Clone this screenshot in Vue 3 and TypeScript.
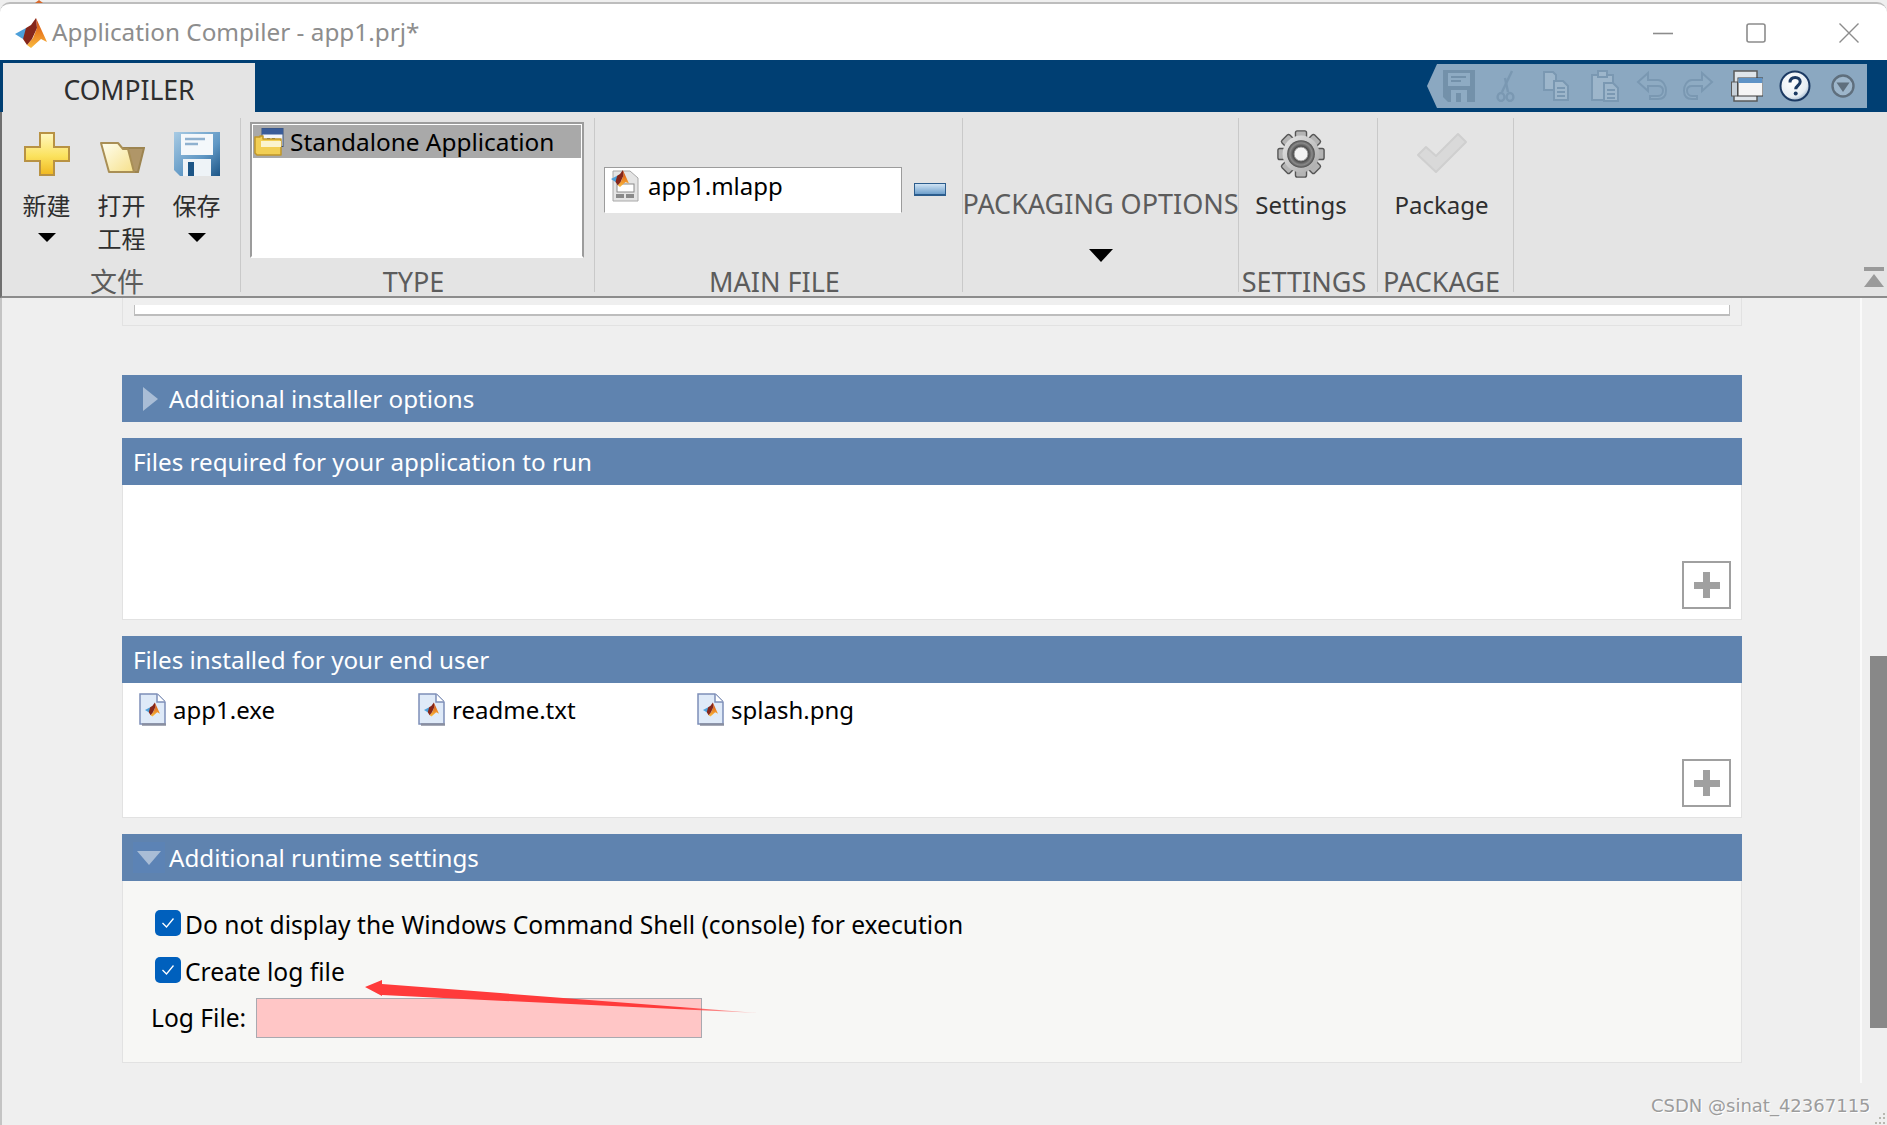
<script setup lang="ts">
const installed: string[] = ['app1.exe', 'readme.txt', 'splash.png']
</script>

<template>
  <div class="window">
    <svg class="defs" width="0" height="0" aria-hidden="true">
      <defs>
        <linearGradient id="mlOrange" x1="0" y1="0" x2="0" y2="1">
          <stop offset="0" stop-color="#c9471c" />
          <stop offset="0.5" stop-color="#ea7f20" />
          <stop offset="1" stop-color="#f9bb40" />
        </linearGradient>
        <linearGradient id="plusFill" x1="0" y1="0" x2="0" y2="1">
          <stop offset="0" stop-color="#fff7c0" />
          <stop offset="0.55" stop-color="#fbe25e" />
          <stop offset="1" stop-color="#f0b820" />
        </linearGradient>
        <linearGradient id="folderFill" x1="0" y1="0" x2="1" y2="1">
          <stop offset="0" stop-color="#fffff0" />
          <stop offset="1" stop-color="#f6e08a" />
        </linearGradient>
        <linearGradient id="saveFill" x1="0" y1="0" x2="1" y2="1">
          <stop offset="0" stop-color="#a8cbe4" />
          <stop offset="0.6" stop-color="#5f97c4" />
          <stop offset="1" stop-color="#1c5586" />
        </linearGradient>
        <radialGradient id="helpFill" cx="0.4" cy="0.35" r="0.75">
          <stop offset="0" stop-color="#ffffff" />
          <stop offset="0.7" stop-color="#e6edf3" />
          <stop offset="1" stop-color="#7d9ab8" />
        </radialGradient>
        <radialGradient id="gearRing" cx="0.5" cy="0.5" r="0.5">
          <stop offset="0.5" stop-color="#3f3f3f" />
          <stop offset="0.8" stop-color="#8a8a8a" />
          <stop offset="1" stop-color="#4a4a4a" />
        </radialGradient>
        <linearGradient id="gearBody" x1="0" y1="0" x2="1" y2="1">
          <stop offset="0" stop-color="#e6e6e6" />
          <stop offset="1" stop-color="#a8a8a8" />
        </linearGradient>
        <symbol id="mlLogo" viewBox="0 0 32 30">
          <polygon points="0,16 11,10 15,14 8,21" fill="#4c9fd9" />
          <polygon points="21,0 32,24 26,21 16,30 12,27 18,20 22,10" fill="url(#mlOrange)" />
          <polygon points="11,10 16,7 21,0 22,10 17,21 12,27 8,21" fill="#85261a" />
        </symbol>
        <symbol id="fileIcon" viewBox="0 0 28 33">
          <path d="M3 1h16l7 7v23H3z" fill="#5a6f9a" />
          <path d="M1 1h17l8 8v22H1z" fill="#dfeaf8" stroke="#7d8fb8" stroke-width="1.5" />
          <path d="M18 1v8h8" fill="#ffffff" stroke="#7d8fb8" stroke-width="1.5" />
          <path d="M3 31.500h24" stroke="#8a8fa0" stroke-width="2.5" />
          <use href="#mlLogo" x="6" y="9" width="15" height="15" />
        </symbol>
      </defs>
    </svg>
    <span class="peek" />

    <header class="titlebar">
      <svg class="logo" width="32" height="30"><use href="#mlLogo" /></svg>
      <span class="title">Application Compiler - app1.prj*</span>
      <div class="winbtns">
        <svg width="20" height="20" viewBox="0 0 20 20"><path d="M0 10.500h20" stroke="#8c8c8c" stroke-width="1.6" /></svg>
        <svg width="20" height="20" viewBox="0 0 20 20"><rect x="1" y="1" width="18" height="18" rx="2" fill="none" stroke="#8c8c8c" stroke-width="1.6" /></svg>
        <svg width="20" height="20" viewBox="0 0 20 20"><path d="M0.500 0.500l19 19M19.500 0.500l-19 19" stroke="#8c8c8c" stroke-width="1.4" /></svg>
      </div>
    </header>

    <div class="band">
      <div class="tab">COMPILER</div>
      <div class="quick">
        <svg class="q" style="width:32px" viewBox="0 0 32 32"><path d="M0 0h32v32H5l-5-5z" fill="#7391aa" /><rect x="5" y="3" width="22" height="13" fill="#8eabc3" /><rect x="8" y="6" width="15" height="2" fill="#7391aa" /><rect x="8" y="10" width="10" height="2" fill="#7391aa" /><rect x="8" y="20" width="16" height="12" fill="#8eabc3" /><rect x="13" y="23" width="5" height="9" fill="#7391aa" /></svg>
        <svg class="q" style="width:19px" viewBox="0 0 19 32"><g fill="none" stroke="#7a98b2" stroke-width="2.4"><path d="M6 22L16 1" /><path d="M12 22L9 8" /><ellipse cx="5" cy="27" rx="3.400" ry="4" /><ellipse cx="14" cy="27" rx="3.400" ry="4" /></g></svg>
        <svg class="q" style="width:26px" viewBox="0 0 26 30"><g fill="#9db6cb" stroke="#7a98b2" stroke-width="2"><path d="M1 1h9l3 3v15H1z" /><path d="M11 10h9l5 5v14H11z" /><path d="M14 17h8M14 21h8M14 25h8" fill="none" /></g></svg>
        <svg class="q" style="width:28px" viewBox="0 0 28 32"><g fill="#9db6cb" stroke="#7a98b2" stroke-width="2"><path d="M1 5h21v25H1z" /><rect x="7" y="1" width="9" height="6" /><path d="M13 13h9l5 5v13H13z" /><path d="M16 20h8M16 24h8M16 28h8" fill="none" /></g></svg>
        <svg class="q" style="width:31px" viewBox="0 0 31 30"><path d="M12 2L2 11l10 9v-5h10c3 0 5 1.500 5 4.500S25 25 22 25h-8v3h8c6 0 8-4 8-8.500S27 9 22 9H12z" fill="#8eabc3" stroke="#7a98b2" stroke-width="2" /></svg>
        <svg class="q" style="width:31px" viewBox="0 0 31 30"><path d="M19 2l10 9-10 9v-5H9c-3 0-5 1.500-5 4.500S6 25 9 25h5v3H9c-6 0-8-4-8-8.500S4 9 9 9h10z" fill="#8eabc3" stroke="#7a98b2" stroke-width="2" /></svg>
        <svg class="q" style="width:32px" viewBox="0 0 32 32"><rect x="3" y="1" width="23" height="30" fill="#dfe5ea" stroke="#5a5a5a" stroke-width="1.500" /><rect x="0.500" y="12" width="6" height="14" fill="#c7d0d8" stroke="#5a5a5a" /><rect x="7" y="8" width="25" height="18" fill="#f5f5f5" stroke="#3a3a3a" /><rect x="7.500" y="8" width="24" height="5" fill="#5f93c6" /></svg>
        <svg class="q" style="width:32px" viewBox="0 0 32 32"><circle cx="16" cy="16" r="14.500" fill="url(#helpFill)" stroke="#1c3a63" stroke-width="2" /><path d="M11 12.500c0-3.500 2.200-5 5.200-5s5 1.700 5 4.300c0 3.700-4.500 3.700-4.500 7.500" fill="none" stroke="#1c3a63" stroke-width="3" /><circle cx="16.700" cy="23.500" r="2" fill="#1c3a63" /></svg>
        <svg class="q" style="width:24px" viewBox="0 0 24 24"><circle cx="12" cy="12" r="10.500" fill="#9db6cb" stroke="#5f6f7d" stroke-width="2.400" /><path d="M5.500 8.500h13L12 18z" fill="#5f6f7d" /></svg>
      </div>
    </div>

    <div class="ribbon">
      <section class="group g-file">
        <div class="group-main tools">
          <div class="tool">
            <svg width="46" height="44" viewBox="0 0 46 44"><path d="M16 1h14v14h15v14H30v14H16V29H1V15h15z" fill="url(#plusFill)" stroke="#b89243" stroke-width="2" /></svg>
            <span>新建</span>
            <i class="caret" />
          </div>
          <div class="tool">
            <svg width="46" height="44" viewBox="0 0 46 44"><path d="M22 16h23l-6 24H26z" fill="#b09668" stroke="#9c8450" stroke-width="2" /><path d="M2 11h17l5 6h5l6 23H10z" fill="url(#folderFill)" stroke="#a98f55" stroke-width="2" stroke-linejoin="round" /></svg>
            <span>打开<br />工程</span>
          </div>
          <div class="tool">
            <svg width="46" height="44" viewBox="0 0 46 44"><path d="M0 0h46v44H6l-6-6z" fill="url(#saveFill)" /><rect x="7" y="2" width="32" height="21" fill="#f4f8fb" /><path d="M11 7h20M11 12h13" stroke="#8fb1cf" stroke-width="2.500" /><rect x="9" y="27" width="28" height="17" fill="#eef3f7" /><rect x="14" y="30" width="6" height="14" fill="#1c5586" /></svg>
            <span>保存</span>
            <i class="caret" />
          </div>
        </div>
        <div class="group-label">文件</div>
      </section>

      <section class="group g-type">
        <div class="group-main">
          <div class="typelist">
            <div class="typerow">
              <svg width="30" height="28" viewBox="0 0 30 28"><rect x="8" y="0.500" width="21" height="18" fill="#f4f6fa" stroke="#39527d" /><rect x="8" y="0.500" width="21" height="6" fill="#3a5c99" /><path d="M13 11h3M18 11h3" stroke="#39527d" stroke-width="2" /><path d="M1 9h5v-1h3v3h18v16H3l-2-2z" fill="#f2cf55" stroke="#c0962a" stroke-width="1.500" stroke-linejoin="round" /><rect x="7" y="13" width="20" height="6" fill="#fbf4cf" /></svg>
              <span>Standalone Application</span>
            </div>
          </div>
        </div>
        <div class="group-label">TYPE</div>
      </section>

      <section class="group g-main">
        <div class="group-main mainfile">
          <div class="fileinput">
            <svg width="28" height="32" viewBox="0 0 28 32"><path d="M2 1h17l8 7v23H2z" fill="#e4e4e4" stroke="#a8a8a8" /><rect x="6" y="14" width="17" height="8" fill="#fff" stroke="#8a8a8a" /><rect x="5" y="24" width="8" height="4" fill="#8a8a8a" /><rect x="15" y="24" width="8" height="4" fill="#8a8a8a" /><use href="#mlLogo" x="0" y="0" width="18" height="17" /></svg>
            <span>app1.mlapp</span>
          </div>
          <span class="minus" />
        </div>
        <div class="group-label">MAIN FILE</div>
      </section>

      <section class="group g-pack">
        <div class="group-main packopts">
          <span>PACKAGING OPTIONS</span>
          <i class="caret big" />
        </div>
      </section>

      <section class="group g-settings">
        <div class="group-main big-tool">
          <svg width="48" height="48" viewBox="0 0 52 52">
            <g fill="#b4b4b4" stroke="#555" stroke-width="1.500">
              <rect x="20" y="1" width="12" height="50" rx="2" />
              <rect x="20" y="1" width="12" height="50" rx="2" transform="rotate(45 26 26)" />
              <rect x="20" y="1" width="12" height="50" rx="2" transform="rotate(90 26 26)" />
              <rect x="20" y="1" width="12" height="50" rx="2" transform="rotate(135 26 26)" />
            </g>
            <circle cx="26" cy="26" r="20" fill="url(#gearBody)" />
            <circle cx="26" cy="26" r="15" fill="url(#gearRing)" />
            <circle cx="26" cy="26" r="7.500" fill="#f4f4f4" stroke="#9a9a9a" />
          </svg>
          <span>Settings</span>
        </div>
        <div class="group-label">SETTINGS</div>
      </section>

      <section class="group g-package">
        <div class="group-main big-tool">
          <svg width="52" height="48" viewBox="0 2 52 48"><path d="M2 27l8-8 10 9L42 6l8 8-30 30z" fill="#d9d9d9" stroke="#cfcfcf" stroke-width="2" stroke-linejoin="round" /></svg>
          <span>Package</span>
        </div>
        <div class="group-label">PACKAGE</div>
      </section>

      <div class="collapse">
        <span class="cbar" />
        <span class="ctri" />
      </div>
    </div>

    <div class="main">
      <div class="scrollarea">
        <div class="stub"><div class="stub-inner" /></div>

        <section class="panel">
          <div class="phead indent">
            <i class="tri-right" />
            Additional installer options
          </div>
        </section>

        <section class="panel">
          <div class="phead">Files required for your application to run</div>
          <div class="pbody files">
            <button class="addbtn"><span class="plus" /></button>
          </div>
        </section>

        <section class="panel">
          <div class="phead">Files installed for your end user</div>
          <div class="pbody files">
            <div class="filerow">
              <div v-for="f in installed" :key="f" class="fileitem">
                <svg width="28" height="33"><use href="#fileIcon" /></svg>
                <span>{{ f }}</span>
              </div>
            </div>
            <button class="addbtn"><span class="plus" /></button>
          </div>
        </section>

        <section class="panel">
          <div class="phead indent">
            <span class="tri-box"><i class="tri-down" /></span>
            Additional runtime settings
          </div>
          <div class="pbody runtime">
            <label class="check">
              <span class="box"><svg width="14" height="12" viewBox="0 0 14 12"><path d="M1.500 6l4 4 7-8.500" fill="none" stroke="#fff" stroke-width="1.300" /></svg></span>
              <span class="check-text">Do not display the Windows Command Shell (console) for execution</span>
            </label>
            <label class="check">
              <span class="box"><svg width="14" height="12" viewBox="0 0 14 12"><path d="M1.500 6l4 4 7-8.500" fill="none" stroke="#fff" stroke-width="1.300" /></svg></span>
              <span class="check-text">Create log file</span>
            </label>
            <div class="logrow">
              <span class="loglabel">Log File:</span>
              <div class="loginput" />
            </div>
          </div>
        </section>
      </div>

      <div class="track"><div class="thumb" /></div>
    </div>

    <svg class="annot" width="400" height="40" viewBox="0 0 400 40">
      <defs>
        <linearGradient id="arrowFade" x1="0" y1="0" x2="1" y2="0">
          <stop offset="0.8" stop-color="#ff3b3b" />
          <stop offset="1" stop-color="#ff3b3b" stop-opacity="0.2" />
        </linearGradient>
      </defs>
      <polygon points="1,7 18,0 18,4 394,33 18,15 18,16" fill="url(#arrowFade)" />
    </svg>

    <div class="watermark">CSDN @sinat_42367115</div>
    <svg class="grip" width="16" height="13" viewBox="0 0 16 13">
      <g fill="#b8b8b0">
        <rect x="12" y="1" width="2" height="2" />
        <rect x="8" y="5" width="2" height="2" /><rect x="12" y="5" width="2" height="2" />
        <rect x="4" y="10" width="2" height="2" /><rect x="8" y="10" width="2" height="2" /><rect x="12" y="10" width="2" height="2" />
      </g>
    </svg>
  </div>
</template>

<style>
html, body { margin: 0; background: #efefef; }
</style>

<style scoped>
.window {
  position: relative;
  width: 1887px;
  height: 1125px;
  overflow: hidden;
  display: flex;
  flex-direction: column;
  box-sizing: border-box;
  padding-top: 2px;
  background: #efefef;
  font-family: "Noto Sans", "Noto Sans CJK SC", sans-serif;
  color: #000;
}
.defs { position: absolute; }
.peek {
  position: absolute;
  left: 35px;
  top: 0;
  width: 0;
  height: 0;
  border-left: 4px solid transparent;
  border-right: 4px solid transparent;
  border-bottom: 3px solid #d8682a;
}
.titlebar {
  height: 58px;
  flex: none;
  background: #fff;
  border-top: 2px solid #bdbdbd;
  border-top-left-radius: 10px;
  border-top-right-radius: 10px;
  display: flex;
  align-items: center;
  padding-left: 15px;
  box-sizing: border-box;
}
.logo { flex: none; margin-top: 1px; }
.title { margin: 0 0 2px 5px; font-size: 24.3px; color: #8d8d8d; white-space: nowrap; }
.winbtns {
  margin-left: auto;
  display: flex;
  gap: 73px;
  padding-right: 28px;
  margin-top: 2px;
}
.band {
  height: 52px;
  flex: none;
  background: #003f73;
  display: flex;
  justify-content: space-between;
  padding: 3px 20px 0 3px;
  box-sizing: border-box;
}
.tab {
  width: 252px;
  background: #e4e4e4;
  font-size: 26.5px;
  color: #2e2e2e;
  text-align: center;
  line-height: 54px;
}
.quick {
  width: 440px;
  height: 44px;
  margin-top: 1px;
  box-sizing: border-box;
  background: #8ba8c1;
  clip-path: polygon(10px 0, 100% 0, 100% 100%, 10px 100%, 0 50%);
  display: flex;
  align-items: center;
  padding-left: 16px;
}
.q { height: 32px; flex: none; }
.q:nth-child(2) { margin-left: 21px; }
.q:nth-child(3) { margin-left: 28px; }
.q:nth-child(4) { margin-left: 22px; }
.q:nth-child(5) { margin-left: 17px; }
.q:nth-child(6) { margin-left: 16px; }
.q:nth-child(7) { margin-left: 17px; }
.q:nth-child(8) { margin-left: 16px; }
.q:nth-child(9) { margin-left: 20px; }
.ribbon {
  position: relative;
  height: 186px;
  flex: none;
  box-sizing: border-box;
  background: #e4e4e4;
  border-bottom: 2px solid #8c8c8c;
  border-left: 2px solid #6f6f6f;
  display: flex;
  font-size: 24px;
  color: #2e2e2e;
}
.group {
  height: 174px;
  margin-top: 6px;
  display: flex;
  flex-direction: column;
  border-right: 1px solid #c9c9c9;
  box-sizing: border-box;
  flex: none;
}
.group-main { flex: 1; min-height: 0; }
.group-label {
  height: 28px;
  margin-bottom: -4px;
  padding-right: 8px;
  text-align: center;
  font-size: 27px;
  line-height: 28px;
  color: #5c5c5c;
  white-space: nowrap;
}
.g-file { width: 239px; }
.g-type { width: 354px; }
.g-main { width: 368px; }
.g-pack { width: 276px; }
.g-settings { width: 139px; }
.g-package { width: 136px; }
.tools { display: flex; padding: 14px 0 0 7px; }
.tool {
  width: 75px;
  display: flex;
  flex-direction: column;
  align-items: center;
  text-align: center;
  line-height: 33px;
  flex: none;
}
.tool span { margin-top: 13px; display: block; }
.tool svg { flex: none; }
.caret {
  display: block;
  width: 0;
  height: 0;
  border-left: 9px solid transparent;
  border-right: 9px solid transparent;
  border-top: 9px solid #000;
  margin-top: 11px;
}
.caret.big {
  border-left-width: 12px;
  border-right-width: 12px;
  border-top-width: 13px;
  margin-top: 27px;
}
.typelist {
  margin: 4px 0 0 9px;
  width: 334px;
  height: 136px;
  box-sizing: border-box;
  background: #fff;
  border: 2px solid #9c9c9c;
  border-bottom-color: #fff;
  padding: 1px;
}
.typerow {
  height: 33px;
  background: #a9a9a9;
  display: flex;
  align-items: center;
  padding-left: 1px;
  gap: 6px;
  color: #000;
  font-size: 24.4px;
}
.mainfile { display: flex; align-items: flex-start; padding: 49px 0 0 9px; gap: 12px; }
.fileinput {
  width: 298px;
  height: 46px;
  box-sizing: border-box;
  background: #fff;
  border: 1px solid #9c9c9c;
  border-bottom-color: #fff;
  display: flex;
  align-items: center;
  padding: 0 0 9px 6px;
  gap: 9px;
  color: #000;
  font-size: 24px;
}
.minus {
  width: 32px;
  height: 13px;
  margin-top: 16px;
  box-sizing: border-box;
  background: linear-gradient(#cfe3f4, #6fa0cc);
  border: 1px solid #2c5d8d;
  border-bottom-width: 2px;
}
.packopts {
  display: flex;
  flex-direction: column;
  align-items: center;
  padding-top: 68px;
  font-size: 27px;
  line-height: 36px;
  color: #5c5c5c;
  white-space: nowrap;
}
.big-tool {
  display: flex;
  flex-direction: column;
  align-items: center;
  padding-top: 12px;
  font-size: 24px;
  line-height: 34px;
}
.g-settings .big-tool { padding-right: 14px; }
.g-package .big-tool { padding-right: 8px; }
.big-tool span { margin-top: 10px; }
.collapse {
  position: absolute;
  right: 3px;
  bottom: 9px;
  display: flex;
  flex-direction: column;
  align-items: center;
  gap: 3px;
}
.cbar { width: 20px; height: 4px; background: #9a9a9a; }
.ctri {
  width: 0; height: 0;
  border-left: 10px solid transparent;
  border-right: 10px solid transparent;
  border-bottom: 13px solid #9a9a9a;
}
.main { flex: 1; min-height: 0; display: flex; border-left: 2px solid #c4c4c4; }
.scrollarea {
  width: 1860px;
  flex: none;
  box-sizing: border-box;
  padding: 0 118px 0 120px;
  border-right: 2px solid #fafafa;
  height: 785px;
}
.stub {
  height: 28px;
  margin-bottom: 49px;
  box-sizing: border-box;
  border: 1px solid #e2e2e2;
  border-top: 0;
  padding: 7px 11px 0;
}
.stub-inner {
  height: 11px;
  background: #fff;
  border-bottom: 2px solid #bdbdbd;
  border-left: 1px solid #bdbdbd;
  border-right: 1px solid #bdbdbd;
  box-sizing: border-box;
}
.panel { margin-bottom: 16px; }
.phead {
  height: 47px;
  background: #5f83af;
  color: #fff;
  font-size: 24.2px;
  line-height: 46px;
  padding-left: 11px;
  white-space: nowrap;
  display: flex;
  align-items: center;
}
.tri-right {
  width: 0; height: 0;
  margin: 0 11px 0 10px;
  border-top: 12px solid transparent;
  border-bottom: 12px solid transparent;
  border-left: 15px solid #a9bdd6;
}
.tri-box {
  width: 32px; height: 31px;
  margin-right: 4px;
  background: #5c83b5;
  display: flex;
  align-items: center;
  justify-content: center;
}
.tri-down {
  width: 0; height: 0;
  border-left: 12px solid transparent;
  border-right: 12px solid transparent;
  border-top: 14px solid #a9bdd6;
}
.pbody {
  box-sizing: border-box;
  border: 1px solid #e2e2e2;
  border-top: 0;
}
.files {
  height: 135px;
  background: #fff;
  position: relative;
  display: flex;
  flex-direction: column;
}
.addbtn {
  position: absolute;
  right: 10px;
  bottom: 10px;
  width: 49px;
  height: 48px;
  box-sizing: border-box;
  background: #fff;
  border: 2px solid #a0a0a0;
  padding: 0;
  display: flex;
  align-items: center;
  justify-content: center;
}
.plus {
  display: block;
  width: 26px;
  height: 26px;
  background:
    linear-gradient(#a0a0a0, #a0a0a0) center / 26px 7px no-repeat,
    linear-gradient(#a0a0a0, #a0a0a0) center / 7px 26px no-repeat;
}
.filerow { display: flex; padding: 10px 0 0 16px; }
.fileitem {
  width: 279px;
  display: flex;
  align-items: center;
  gap: 6px;
  font-size: 24px;
  flex: none;
}
.runtime {
  height: 182px;
  background: #f7f7f5;
  padding: 29px 0 0 32px;
  font-size: 24.6px;
}
.check {
  display: flex;
  align-items: center;
  gap: 4px;
  height: 26px;
  margin-bottom: 21px;
  white-space: nowrap;
}
.check-text { margin-top: 2px; }
.box {
  width: 26px; height: 26px;
  border-radius: 5px;
  background: #0060bd;
  display: flex;
  align-items: center;
  justify-content: center;
  flex: none;
}
.logrow {
  display: flex;
  align-items: center;
  margin: -6px 0 0 -4px;
  gap: 10px;
}
.loglabel { margin-bottom: 2px; }
.loginput {
  width: 446px;
  height: 40px;
  box-sizing: border-box;
  background: #ffc6c6;
  border: 1px solid #a9a9b0;
}
.track { flex: 1; padding-left: 8px; height: 785px; }
.thumb { margin-top: 358px; height: 372px; background: #888; }
.annot { position: absolute; left: 364px; top: 980px; }
.watermark {
  position: absolute;
  left: 1651px;
  top: 1095px;
  font-family: "DejaVu Sans", sans-serif;
  font-size: 18px;
  color: #9c9c9c;
  text-shadow: 1px 1px 0 #fff;
  white-space: nowrap;
}
.grip { position: absolute; right: 0; bottom: 0; }
</style>
